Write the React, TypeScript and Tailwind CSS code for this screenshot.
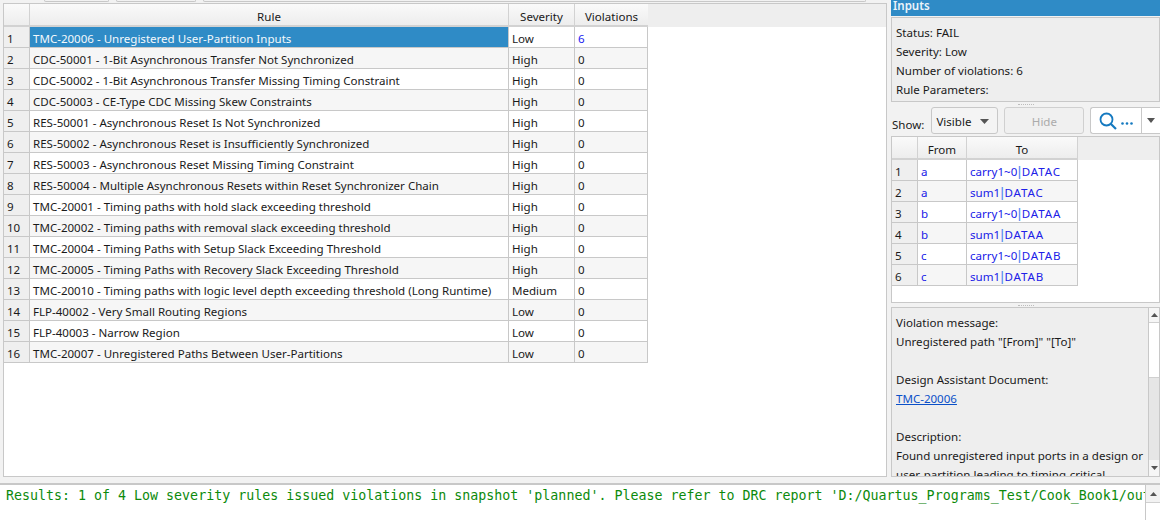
import React from 'react';

const rules: [string, string, string][] = [
  ['TMC-20006 - Unregistered User-Partition Inputs', 'Low', '6'],
  ['CDC-50001 - 1-Bit Asynchronous Transfer Not Synchronized', 'High', '0'],
  ['CDC-50002 - 1-Bit Asynchronous Transfer Missing Timing Constraint', 'High', '0'],
  ['CDC-50003 - CE-Type CDC Missing Skew Constraints', 'High', '0'],
  ['RES-50001 - Asynchronous Reset Is Not Synchronized', 'High', '0'],
  ['RES-50002 - Asynchronous Reset is Insufficiently Synchronized', 'High', '0'],
  ['RES-50003 - Asynchronous Reset Missing Timing Constraint', 'High', '0'],
  ['RES-50004 - Multiple Asynchronous Resets within Reset Synchronizer Chain', 'High', '0'],
  ['TMC-20001 - Timing paths with hold slack exceeding threshold', 'High', '0'],
  ['TMC-20002 - Timing paths with removal slack exceeding threshold', 'High', '0'],
  ['TMC-20004 - Timing Paths with Setup Slack Exceeding Threshold', 'High', '0'],
  ['TMC-20005 - Timing Paths with Recovery Slack Exceeding Threshold', 'High', '0'],
  ['TMC-20010 - Timing paths with logic level depth exceeding threshold (Long Runtime)', 'Medium', '0'],
  ['FLP-40002 - Very Small Routing Regions', 'Low', '0'],
  ['FLP-40003 - Narrow Region', 'Low', '0'],
  ['TMC-20007 - Unregistered Paths Between User-Partitions', 'Low', '0'],
];

const violations: [string, string, string][] = [
  ['a', 'carry1~0', 'DATAC'],
  ['a', 'sum1', 'DATAC'],
  ['b', 'carry1~0', 'DATAA'],
  ['b', 'sum1', 'DATAA'],
  ['c', 'carry1~0', 'DATAB'],
  ['c', 'sum1', 'DATAB'],
];

function Splitter({ h }: { h: string }) {
  return (
    <div className={`${h} flex items-center justify-center`}>
      <div className="h-px w-[16px] border-t border-dotted border-[#bdbdbd]" />
    </div>
  );
}

function HeaderCell({ w, label }: { w: string; label: string }) {
  return (
    <div className={`${w} flex h-full shrink-0 items-center justify-center border-r border-b-2 border-[#d2d2d2] bg-gradient-to-b from-[#fafafa] to-[#ededed] pt-[5px]`}>
      {label}
    </div>
  );
}

function RulesTable() {
  return (
    <div className="h-[474px] w-[884px] shrink-0 overflow-hidden border border-[#c8c8c8] bg-white">
      <div className="flex h-[23px] w-full items-stretch bg-[#eeeeee]">
        <HeaderCell w="w-[26px]" label="" />
        <HeaderCell w="w-[479px]" label="Rule" />
        <HeaderCell w="w-[66px]" label="Severity" />
        <div className="flex w-[73px] shrink-0 items-center justify-center border-b-2 border-[#d2d2d2] bg-gradient-to-b from-[#fafafa] to-[#ededed] pt-[5px]">
          Violations
        </div>
        <div className="flex-1 bg-[#eeeeee]" />
      </div>
      {rules.map(([name, severity, count], i) => {
        const odd = i % 2 === 1;
        const selected = i === 0;
        return (
          <div key={name} className="flex h-[21px] w-[644px] items-stretch">
            <div className="flex w-[26px] shrink-0 items-center border-r border-b border-[#c8c8c8] bg-[#efefef] pl-[3px] pt-[3px]">
              {i + 1}
            </div>
            <div className={`flex w-[479px] shrink-0 items-center overflow-hidden whitespace-nowrap border-r border-b border-[#c8c8c8] pl-[3px] pt-[3px] ${selected ? 'bg-[#2f8bc6] text-[#f4f9fc]' : odd ? 'bg-[#f6f6f6]' : 'bg-white'}`}>
              {name}
            </div>
            <div className={`flex w-[66px] shrink-0 items-center border-r border-b border-[#c8c8c8] pl-[3px] pt-[3px] ${odd ? 'bg-[#f6f6f6]' : 'bg-white'}`}>
              {severity}
            </div>
            <div className={`flex w-[73px] shrink-0 items-center border-r border-b border-[#c8c8c8] pl-[3px] pt-[3px] ${selected ? 'text-[#2020f0]' : ''} ${odd ? 'bg-[#f6f6f6]' : 'bg-white'}`}>
              {count}
            </div>
          </div>
        );
      })}
    </div>
  );
}

function ViolationsTable() {
  return (
    <div className="h-[167px] overflow-hidden border border-[#c8c8c8] bg-white">
      <div className="flex h-[23px] items-stretch bg-[#eeeeee]">
        <HeaderCell w="w-[26px]" label="" />
        <HeaderCell w="w-[49px]" label="From" />
        <HeaderCell w="w-[111px]" label="To" />
        <div className="flex-1" />
      </div>
      {violations.map(([from, node, port], i) => (
        <div key={i} className="flex h-[21px] w-[186px] items-stretch">
          <div className="flex w-[26px] shrink-0 items-center border-r border-b border-[#c8c8c8] bg-[#efefef] pl-[3px] pt-[3px]">
            {i + 1}
          </div>
          <div className={`flex w-[49px] shrink-0 items-center border-r border-b border-[#c8c8c8] pl-[3px] pt-[3px] text-[#2020e8] ${i % 2 ? 'bg-[#f6f6f6]' : 'bg-white'}`}>
            {from}
          </div>
          <div className={`flex w-[111px] shrink-0 items-center border-r border-b border-[#c8c8c8] pl-[3px] pt-[3px] text-[#2020e8] ${i % 2 ? 'bg-[#f6f6f6]' : 'bg-white'}`}>
            {node}
            <span className="-mx-[1px] font-bold text-[#5a8cf0]">|</span>
            <span className="tracking-[0.9px]">{port}</span>
          </div>
        </div>
      ))}
    </div>
  );
}

function Toolbar() {
  return (
    <div className="flex h-[29px] items-start pl-[1px]">
      <span className="mr-[7px] pt-[10px] leading-[16px]">Show:</span>
      <div className="flex h-[27px] w-[67px] items-center justify-between rounded-[3px] border border-[#c8c8c8] bg-[#f4f4f4] pl-[4px] pr-[8px] pt-[2px]">
        <span>Visible</span>
        <svg width="9" height="5" viewBox="0 0 9 5"><path d="M0 0h9L4.5 5z" fill="#555" /></svg>
      </div>
      <div className="ml-[6px] flex h-[27px] w-[80px] items-center justify-center rounded-[3px] border border-[#d0d0d0] bg-[#f0f0f0] pt-[2px] text-[#ababab]">
        Hide
      </div>
      <div className="ml-[6px] flex h-[27px] flex-1 items-center rounded-l-[3px] border border-r-0 border-[#c8c8c8] bg-white">
        <div className="flex h-full w-[51px] items-center justify-center gap-[4px] border-r border-[#c8c8c8]">
          <svg width="18" height="18" viewBox="0 0 18 18" fill="none" stroke="#1479c0">
            <circle cx="7.5" cy="7.5" r="6" strokeWidth="1.8" />
            <path d="M12 12l5 5" strokeWidth="2.2" />
          </svg>
          <svg className="mt-[6px]" width="12" height="3" viewBox="0 0 12 3" fill="#1479c0">
            <circle cx="1.5" cy="1.5" r="1.3" />
            <circle cx="6" cy="1.5" r="1.3" />
            <circle cx="10.5" cy="1.5" r="1.3" />
          </svg>
        </div>
        <div className="flex flex-1 justify-center">
          <svg width="8" height="5" viewBox="0 0 8 5"><path d="M0 0h8L4 5z" fill="#555" /></svg>
        </div>
      </div>
    </div>
  );
}

function ScrollBar() {
  return (
    <div className="flex w-[11px] shrink-0 flex-col border-l border-[#c8c8c8] bg-[#e6e6e6]">
      <div className="flex h-[14px] items-center justify-center bg-[#f6f6f6]">
        <svg width="7" height="4" viewBox="0 0 7 4"><path d="M3.5 0L7 4H0z" fill="#555" /></svg>
      </div>
      <div className="h-[56px] border-y border-[#d0d0d0] bg-white" />
      <div className="flex-1" />
      <div className="flex h-[16px] items-center justify-center bg-[#f6f6f6]">
        <svg width="7" height="4" viewBox="0 0 7 4"><path d="M0 0h7L3.5 4z" fill="#555" /></svg>
      </div>
    </div>
  );
}

function DetailsPanel() {
  return (
    <div className="flex h-[170px] overflow-hidden border border-[#c8c8c8] bg-[#eeeeee]">
      <div className="flex-1 overflow-hidden pl-[4px] pt-[5px] leading-[19px]">
        <div>Violation message:</div>
        <div>Unregistered path "[From]" "[To]"</div>
        <div className="h-[19px]" />
        <div>Design Assistant Document:</div>
        <div className="text-[#0b50c8] underline">TMC-20006</div>
        <div className="h-[19px]" />
        <div>Description:</div>
        <div>Found unregistered input ports in a design or</div>
        <div>user-partition leading to timing-critical</div>
      </div>
      <ScrollBar />
    </div>
  );
}

function SidePanel() {
  return (
    <div className="flex h-[477px] w-[269px] shrink-0 flex-col">
      <div className="flex h-[16px] shrink-0 items-end bg-[#2f8bc6] pb-[3px] pl-[2px] font-semibold leading-[14px] text-[#eaf4fa]">
        Inputs
      </div>
      <div className="mt-px h-[85px] shrink-0 border border-[#c8c8c8] bg-[#eeeeee] pl-[4px] pt-[5px] leading-[19px]">
        <div>Status: FAIL</div>
        <div>Severity: Low</div>
        <div>Number of violations: 6</div>
        <div>Rule Parameters:</div>
      </div>
      <Splitter h="h-[5px]" />
      <Toolbar />
      <ViolationsTable />
      <Splitter h="h-[4px]" />
      <DetailsPanel />
    </div>
  );
}

export default function App() {
  return (
    <div className="h-[520px] w-[1160px] overflow-hidden bg-[#f2f2f2] text-[11.55px] text-[#1a1a1a] [font-family:'Noto_Sans',sans-serif]">
      <div className="flex h-[3px] items-start gap-[7px] pl-[44px]">
        <div className="h-[2px] w-[65px] rounded-b-[2px] border-x border-b border-[#c8c8c8]" />
        <div className="h-[2px] w-[80px] rounded-b-[2px] border-x border-b border-[#c8c8c8]" />
        <div className="h-[2px] w-[663px] rounded-b-[2px] border-x border-b border-[#c8c8c8]" />
      </div>
      <div className="flex h-[477px] items-start">
        <div className="w-[3px] shrink-0" />
        <RulesTable />
        <div className="w-[4px] shrink-0" />
        <div className="-mt-[3px]">
          <SidePanel />
        </div>
      </div>
      <div className="h-[3px]" />
      <div className="flex h-[37px] border-t-2 border-[#c8c8c8] bg-white">
        <div className="flex-1 overflow-hidden whitespace-nowrap pl-[6px] pt-[2px] text-[13.3px] leading-[17px] text-[#0c8a0c] [font-family:'DejaVu_Sans_Mono',monospace]">
          Results: 1 of 4 Low severity rules issued violations in snapshot 'planned'. Please refer to DRC report 'D:/Quartus_Programs_Test/Cook_Book1/output_files/planned.drc.rpt' for details.
        </div>
        <div className="flex w-[15px] shrink-0 flex-col border-l border-[#c8c8c8] bg-[#f2f2f2]">
          <div className="flex h-[17px] items-center justify-center">
            <svg width="7" height="4" viewBox="0 0 7 4"><path d="M3.5 0L7 4H0z" fill="#555" /></svg>
          </div>
          <div className="flex-1 border-t border-[#d0d0d0] bg-white" />
        </div>
      </div>
    </div>
  );
}
